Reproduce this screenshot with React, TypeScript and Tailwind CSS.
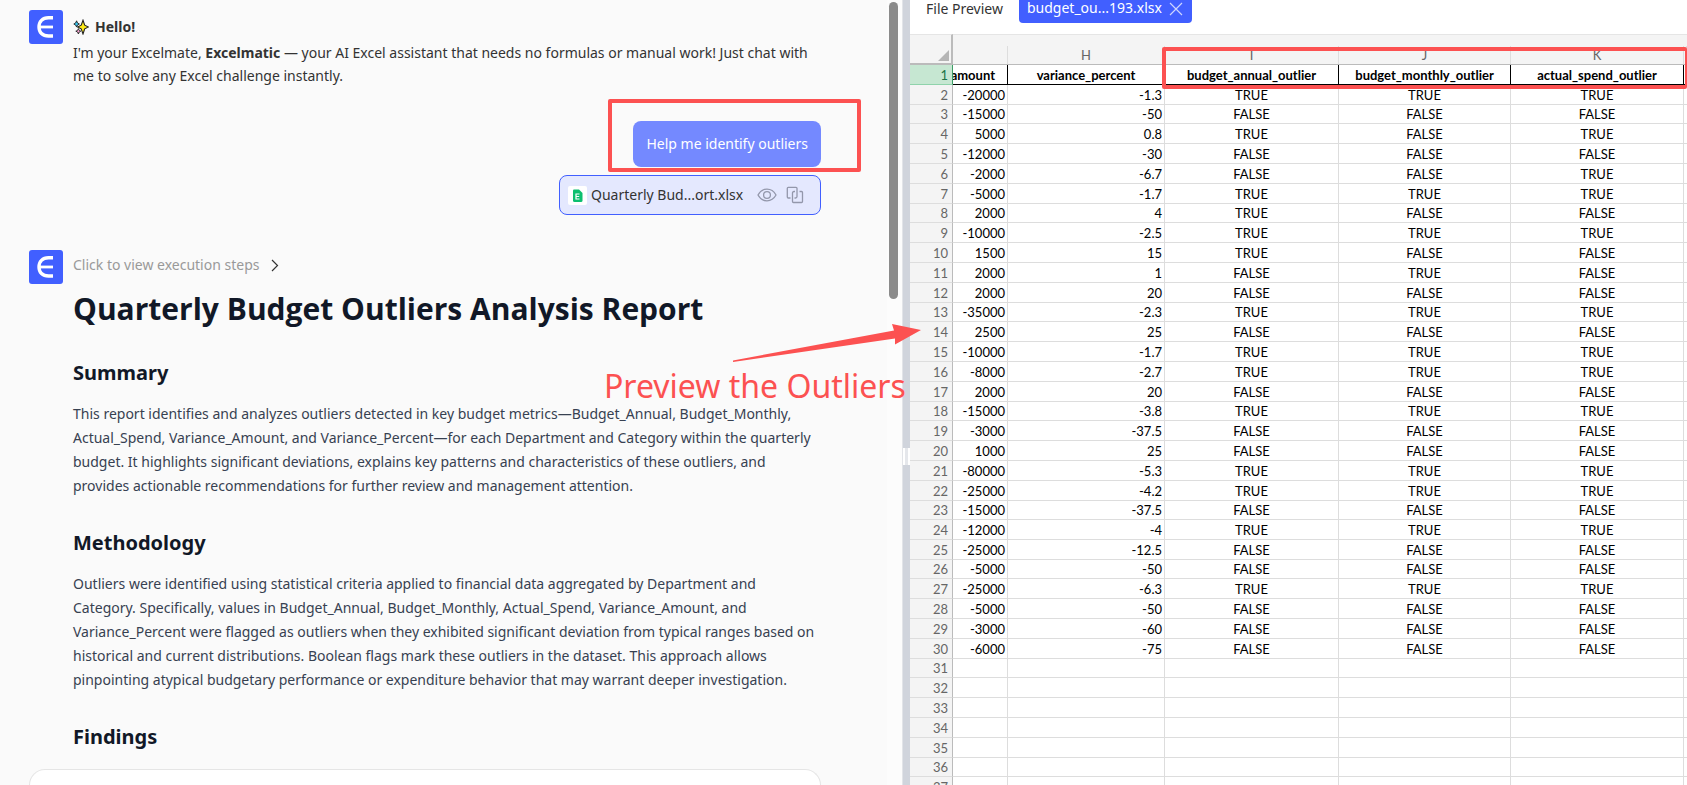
const rows = [
  ["-20000", "-1.3", "TRUE", "TRUE", "TRUE"],
  ["-15000", "-50", "FALSE", "FALSE", "FALSE"],
  ["5000", "0.8", "TRUE", "FALSE", "TRUE"],
  ["-12000", "-30", "FALSE", "FALSE", "FALSE"],
  ["-2000", "-6.7", "FALSE", "FALSE", "TRUE"],
  ["-5000", "-1.7", "TRUE", "TRUE", "TRUE"],
  ["2000", "4", "TRUE", "FALSE", "FALSE"],
  ["-10000", "-2.5", "TRUE", "TRUE", "TRUE"],
  ["1500", "15", "TRUE", "FALSE", "FALSE"],
  ["2000", "1", "FALSE", "TRUE", "FALSE"],
  ["2000", "20", "FALSE", "FALSE", "FALSE"],
  ["-35000", "-2.3", "TRUE", "TRUE", "TRUE"],
  ["2500", "25", "FALSE", "FALSE", "FALSE"],
  ["-10000", "-1.7", "TRUE", "TRUE", "TRUE"],
  ["-8000", "-2.7", "TRUE", "TRUE", "TRUE"],
  ["2000", "20", "FALSE", "FALSE", "FALSE"],
  ["-15000", "-3.8", "TRUE", "TRUE", "TRUE"],
  ["-3000", "-37.5", "FALSE", "FALSE", "FALSE"],
  ["1000", "25", "FALSE", "FALSE", "FALSE"],
  ["-80000", "-5.3", "TRUE", "TRUE", "TRUE"],
  ["-25000", "-4.2", "TRUE", "TRUE", "TRUE"],
  ["-15000", "-37.5", "FALSE", "FALSE", "FALSE"],
  ["-12000", "-4", "TRUE", "TRUE", "TRUE"],
  ["-25000", "-12.5", "FALSE", "FALSE", "FALSE"],
  ["-5000", "-50", "FALSE", "FALSE", "FALSE"],
  ["-25000", "-6.3", "TRUE", "TRUE", "TRUE"],
  ["-5000", "-50", "FALSE", "FALSE", "FALSE"],
  ["-3000", "-60", "FALSE", "FALSE", "FALSE"],
  ["-6000", "-75", "FALSE", "FALSE", "FALSE"],
  ...Array.from({ length: 7 }, () => ["", "", "", "", ""]),
];

const shortRows = [3, 8, 13, 18, 23, 26, 31, 36];

const Logo = () => (
  <svg className="size-[34px] shrink-0" viewBox="0 0 34 34" aria-label="Excelmatic">
    <rect width="34" height="34" rx="3" fill="#415fff" />
    <path d="M24 7.8H19.5C13.4 7.8 10 11.5 10 17S13.4 26 19.5 26H24" fill="none" stroke="#fff" strokeWidth="3.4" />
    <path d="M10 17H24" stroke="#fff" strokeWidth="2.8" />
  </svg>
);

const Sparkles = () => (
  <svg className="size-4" viewBox="0 0 16 16" aria-hidden="true">
    <path d="M10 1.2L11.7 6.2L15.5 8L11.7 9.8L10 15L8.2 9.8L4.6 8L8.2 6.2Z" fill="#fde918" stroke="#222" strokeWidth="1.1" />
    <path d="M3.6 1.8L4.5 4L6.4 5L4.5 6L3.6 8L2.6 6L.8 5L2.6 4Z" fill="#35c5ee" stroke="#222" strokeWidth=".9" />
    <path d="M5.4 9.6L6.2 11.4L7.8 12.2L6.2 13L5.4 15L4.6 13L2.8 12.2L4.6 11.4Z" fill="#f9a8d4" stroke="#222" strokeWidth=".9" />
  </svg>
);

const Chat = () => {
  return (
    <div className="h-full overflow-hidden pl-[29px] pr-[66px] pt-[10px]">
      <div className="flex gap-[10px]">
        <Logo />
        <div className="text-[14px] leading-[23px] text-[#333]">
          <p className="flex items-center gap-[6px] pt-[5px] font-bold">
            <Sparkles /> Hello!
          </p>
          <p className="pt-[3px]">
            I'm your Excelmate, <strong>Excelmatic</strong> — your AI Excel assistant that needs no formulas or manual work! Just chat with me to solve any Excel challenge instantly.
          </p>
        </div>
      </div>

      <div className="mt-[34px] flex flex-col items-end gap-2">
        <div className="relative">
          <div className="rounded-lg bg-[#7489ff] px-[13px] py-[11px] text-[14px] leading-6 text-white">Help me identify outliers</div>
          <div className="absolute -left-[25px] -right-10 -top-[22px] -bottom-[5px] rounded-xs border-4 border-[#fc5151]" />
        </div>
        <div className="flex h-10 w-[262px] items-center rounded-lg border border-[#415fff] bg-[#e4e8fe] px-2">
          <svg className="size-[19px] shrink-0" viewBox="0 0 19 19" aria-hidden="true">
            <rect width="19" height="19" rx="2" fill="#fff" />
            <path d="M6 3.5H11L14.5 7V14.5Q14.5 16 13 16H6.5Q5 16 5 14.5V4.5Q5 3.5 6 3.5Z" fill="#0dbf6f" />
            <path d="M11.5 8H8V13H11.5M8 10.5H11.2" fill="none" stroke="#fff" strokeWidth="1.2" />
          </svg>
          <span className="ml-1 flex-1 whitespace-nowrap text-[14px] leading-5 text-[#333]">Quarterly Bud...ort.xlsx</span>
          <button aria-label="Preview">
            <svg className="size-5" viewBox="0 0 20 20" fill="none" stroke="#9397ab" strokeWidth="1.3">
              <path d="M1 10C3.2 6 6.4 4.2 10 4.2S16.8 6 19 10C16.8 14 13.6 15.8 10 15.8S3.2 14 1 10Z" />
              <circle cx="10" cy="10" r="3.4" />
            </svg>
          </button>
          <button aria-label="Copy" className="ml-2 mr-[7px]">
            <svg className="size-5" viewBox="0 0 20 20" fill="none" stroke="#9397ab" strokeWidth="1.3">
              <path d="M5.5 13H3.3Q2.3 13 2.3 12V3.3Q2.3 2.3 3.3 2.3H11Q12 2.3 12 3.3V11.5Q12 13 10.5 13H9.5" />
              <path d="M14.5 6.5H16.5Q17.5 6.5 17.5 7.5V16.5Q17.5 17.5 16.5 17.5H8.5Q7.5 17.5 7.5 16.5V8Q7.5 6.5 9 6.5H10" />
            </svg>
          </button>
        </div>
      </div>

      <div className="mt-[35px] flex gap-[10px]">
        <Logo />
        <div className="text-[14px] leading-6 text-[#374151]">
          <button className="flex items-center gap-2 pt-[3px] text-[#999]">
            Click to view execution steps
            <svg className="size-4" viewBox="0 0 16 16" fill="none" stroke="#333" strokeWidth="1.2">
              <path d="M5 3L10.5 8.5L5 14" />
            </svg>
          </button>
          <h1 className="mt-[13px] text-[30px] font-bold leading-[38px] text-[#111827] [font-family:'Open_Sans',sans-serif]">Quarterly Budget Outliers Analysis Report</h1>
          <h2 className="mt-[31px] text-[20px] font-bold leading-7 text-[#111827]">Summary</h2>
          <p className="mt-[15px]">
            This report identifies and analyzes outliers detected in key budget metrics—Budget_Annual, Budget_Monthly, Actual_Spend, Variance_Amount, and Variance_Percent—for each Department and Category within the quarterly budget. It highlights significant deviations, explains key patterns and characteristics of these outliers, and provides actionable recommendations for further review and management attention.
          </p>
          <h2 className="mt-[31px] text-[20px] font-bold leading-7 text-[#111827]">Methodology</h2>
          <p className="mt-[15px]">
            Outliers were identified using statistical criteria applied to financial data aggregated by Department and Category. Specifically, values in Budget_Annual, Budget_Monthly, Actual_Spend, Variance_Amount, and Variance_Percent were flagged as outliers when they exhibited significant deviation from typical ranges based on historical and current distributions. Boolean flags mark these outliers in the dataset. This approach allows pinpointing atypical budgetary performance or expenditure behavior that may warrant deeper investigation.
          </p>
          <h2 className="mt-[31px] text-[20px] font-bold leading-7 text-[#111827]">Findings</h2>
        </div>
      </div>
    </div>
  );
};

const Sheet = () => {
  return (
    <table className="w-full table-fixed border-separate border-spacing-0 text-[13px] leading-4 text-black [font-family:Lato,sans-serif]">
      <colgroup>
        <col className="w-[43px]" />
        <col className="w-[55px]" />
        <col className="w-[157px]" />
        <col className="w-[174px]" />
        <col className="w-[172px]" />
        <col className="w-[173px]" />
        <col />
      </colgroup>
      <thead>
        <tr className="h-[31px] bg-[#f4f4f4] text-[#666]">
          <th className="border-b-2 border-r-2 border-t border-b-[#bbb] border-r-[#bbb] border-t-[#e5e5e5] p-0 align-bottom">
            <svg className="mb-[2px] ml-auto mr-[2px] size-[11px]" viewBox="0 0 11 11" aria-hidden="true">
              <path d="M11 0V11H0Z" fill="#b5b5b5" />
            </svg>
          </th>
          {["", "H", "I", "J", "K", ""].map((name, i) => (
            <th key={i} className="border-b border-t border-b-[#bbb] border-t-[#e5e5e5] p-0 align-bottom font-normal">
              <div className="h-[18px] border-r border-[#ddd] pt-px">{name}</div>
            </th>
          ))}
        </tr>
      </thead>
      <tbody>
        <tr className="h-5">
          <th className="border-b border-r border-b-[#8fd3ab] border-r-[#3e9c66] bg-[#c6e7d2] p-0 pr-1 text-right font-normal text-[#217346]">1</th>
          <th className="overflow-hidden border-b border-r border-black p-0 text-right">
            <div className="flex justify-end whitespace-nowrap pr-3">variance_amount</div>
          </th>
          {["variance_percent", "budget_annual_outlier", "budget_monthly_outlier", "actual_spend_outlier"].map((name) => (
            <th key={name} className="border-b border-r border-black p-0">{name}</th>
          ))}
          <th className="border-b border-black p-0" />
        </tr>
        {rows.map((row, i) => (
          <tr key={i} className={shortRows.includes(i + 2) ? "h-[19px]" : "h-5"}>
            <th className="border-b border-r border-b-[#ddd] border-r-[#bbb] bg-[#f4f4f4] p-0 pr-1 text-right font-normal text-[#666]">{i + 2}</th>
            {row.map((cell, j) => (
              <td key={j} className={j < 2 ? "border-b border-r border-[#ddd] p-0 pr-[2px] text-right" : "border-b border-r border-[#ddd] p-0 text-center"}>
                {cell}
              </td>
            ))}
            <td className="border-b border-[#ddd] p-0" />
          </tr>
        ))}
      </tbody>
    </table>
  );
};

const App = () => {
  return (
    <div className="relative flex h-screen overflow-hidden bg-[#fafafa] [font-family:'Noto_Sans',sans-serif]">
      <div className="relative w-[887px] min-w-0 shrink">
        <Chat />
        <div className="absolute bottom-0 left-[29px] right-[66px] h-4 rounded-t-[20px] border border-b-0 border-[#e5e5e5] bg-white" />
      </div>
      <div className="w-[15px] shrink-0 bg-[#fcfcfc] pl-[2px] pt-[2px]">
        <div className="h-[297px] w-[9px] rounded-full bg-[#8b8b8b]" />
      </div>
      <div className="flex w-2 shrink-0 flex-col justify-center border-l border-[#e2e4e8] bg-[#d0d4dc]">
        <div className="mt-32 h-[17px] border-x-2 border-white bg-[#e5e7eb]" />
      </div>

      <div className="min-w-0 flex-1 overflow-hidden bg-white">
        <div className="flex h-[34px] items-start gap-4 pl-4 text-[14px]">
          <span className="leading-[18px] text-[#333]">File Preview</span>
          <div className="flex h-[23px] items-start gap-[6px] rounded-b-sm bg-[#415fff] px-2 leading-4 text-white">
            budget_ou...193.xlsx
            <button aria-label="Close">
              <svg className="size-4" viewBox="0 0 16 16" stroke="#cdd5ff" strokeWidth="1.2">
                <path d="M2 3L14 15M14 3L2 15" />
              </svg>
            </button>
          </div>
        </div>
        <Sheet />
      </div>

      <div className="absolute left-[1162px] right-0 top-[47px] h-[42px] rounded-xs border-4 border-r-2 border-[#fc5151]" />
      <svg className="absolute left-[733px] top-[323px] h-10 w-[188px]" viewBox="0 0 188 40" aria-hidden="true">
        <path d="M0 37.5L161 7.5L159 1L188 7L162 21.5L162 15.5L0 39Z" fill="#fc5151" />
      </svg>
      <p className="absolute left-[604px] top-[364px] whitespace-nowrap text-[32px] leading-[44px] text-[#fc5151]">Preview the Outliers</p>
    </div>
  );
};

export default App;
